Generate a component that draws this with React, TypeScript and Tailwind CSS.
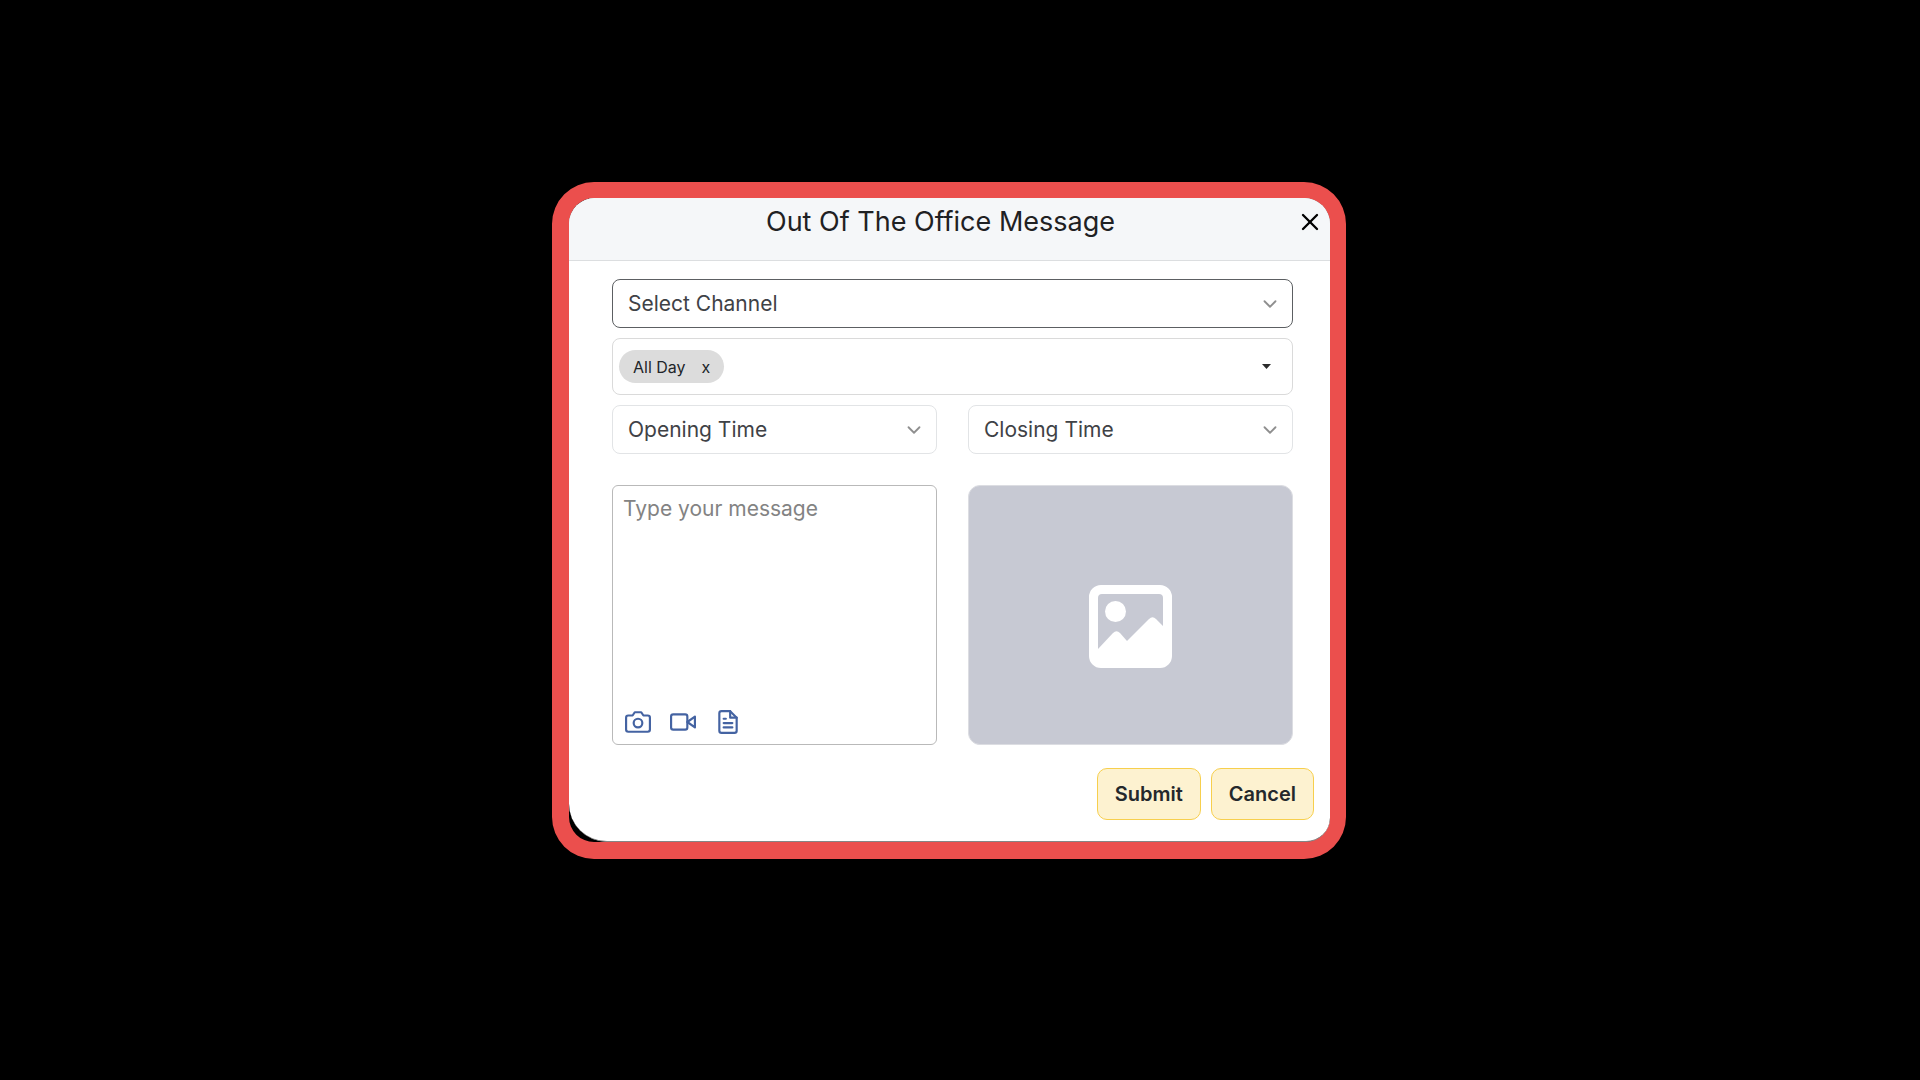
import React from "react";
import { ChevronDown, X } from "lucide-react";
import { FiCamera, FiFileText, FiVideo } from "react-icons/fi";

type SelectFieldProps = {
  id: string;
  label: string;
  borderClass: string;
};

function SelectField({ id, label, borderClass }: SelectFieldProps) {
  return (
    <div className="relative">
      <select
        id={id}
        className={`block h-[49px] w-full appearance-none rounded-lg border bg-white px-4 text-[21px] outline-none ${borderClass}`}
      >
        <option value="" />
      </select>
      <label
        htmlFor={id}
        className="pointer-events-none absolute inset-y-0 left-4 flex items-center text-[21px] text-[#3f4246]"
      >
        {label}
      </label>
      <ChevronDown
        className="pointer-events-none absolute top-[14px] right-3 text-[#8f8f8f]"
        size={22}
        strokeWidth={2}
        aria-hidden="true"
      />
    </div>
  );
}

function PictureIcon() {
  return (
    <svg viewBox="0 0 83 83" className="size-[83px]" aria-hidden="true">
      <path
        fill="#fff"
        fillRule="evenodd"
        d="M12 0H71A12 12 0 0 1 83 12V71A12 12 0 0 1 71 83H12A12 12 0 0 1 0 71V12A12 12 0 0 1 12 0ZM13 9Q9 9 9 13V64L24 48Q27.500 44.500 31 48L38 56L60 34Q63.500 30.500 67 34L74 41V13Q74 9 70 9Z"
      />
      <circle cx="26.500" cy="26.500" r="10.500" fill="#fff" />
    </svg>
  );
}

const actionClass =
  "h-[52px] rounded-[10px] border border-[#f7cf4d] bg-[#fdf2d0] px-[17px] text-[20px] font-semibold text-[#24282c]";

const attachments = [
  { name: "Attach photo", Icon: FiCamera },
  { name: "Attach video", Icon: FiVideo },
  { name: "Attach document", Icon: FiFileText },
];

export default function App() {
  return (
    <main className="flex min-h-screen items-center justify-center bg-black pr-[22px] pb-[39px] font-['Inter',sans-serif]">
      <div className="w-full max-w-[794px] rounded-[42px] border-16 border-b-[17px] border-l-[17px] border-[#eb4f4d] bg-black bg-clip-padding">
        <section
          role="dialog"
          aria-labelledby="dialog-title"
          className="overflow-hidden rounded-t-[26px] rounded-br-[24px] rounded-bl-[38px] border-b border-[#858585] bg-white"
        >
          <header className="flex h-[63px] items-start border-b border-[#dcdee0] bg-[#f5f7f9] pt-1 pr-[6px] pl-4">
            <h1
              id="dialog-title"
              className="flex-1 text-center text-[27px] leading-10 text-[#1f2123]"
            >
              Out Of The Office Message
            </h1>
            <button type="button" aria-label="Close" className="mt-[6px] text-black">
              <X size={28} strokeWidth={2} />
            </button>
          </header>

          <form onSubmit={(event) => event.preventDefault()}>
            <div className="pt-[18px] pr-[37px] pl-[43px]">
              <SelectField id="channel" label="Select Channel" borderClass="border-[#5c5f62]" />

              <div className="mt-[10px] flex h-[57px] items-center justify-between rounded-lg border border-[#dadada] pr-[17px] pl-[6px]">
                <span className="flex h-[33px] items-center gap-4 rounded-full bg-[#dcdcdc] px-[14px] text-[16px] text-[#212529]">
                  All Day
                  <button type="button" aria-label="Remove All Day">
                    x
                  </button>
                </span>
                <button type="button" aria-label="Show days" className="p-1">
                  <svg viewBox="0 0 9 5" className="h-[5px] w-[9px]" aria-hidden="true">
                    <path d="M0 0H9L4.500 5Z" fill="#2b2b2b" />
                  </svg>
                </button>
              </div>

              <div className="mt-[10px] grid grid-cols-2 gap-[31px]">
                <SelectField id="opening" label="Opening Time" borderClass="border-[#e2e4e6]" />
                <SelectField id="closing" label="Closing Time" borderClass="border-[#e2e4e6]" />

                <div className="flex h-[260px] flex-col rounded-md border border-[#b9b9b9]">
                  <textarea
                    aria-label="Message"
                    placeholder="Type your message"
                    className="flex-1 resize-none bg-transparent px-[10px] pt-[7px] text-[21px] leading-8 outline-none placeholder:text-[#838383]"
                  />
                  <div className="flex gap-[19px] pb-[9px] pl-3 text-[#4463a2]">
                    {attachments.map(({ name, Icon }) => (
                      <button key={name} type="button" aria-label={name}>
                        <Icon size={26} />
                      </button>
                    ))}
                  </div>
                </div>

                <div className="flex h-[260px] items-center justify-center rounded-xl border border-[#dcdde2] bg-[#c7c9d3] pt-[22px]">
                  <PictureIcon />
                </div>
              </div>
            </div>

            <footer className="flex justify-end gap-[10px] pt-[23px] pr-4 pb-[21px]">
              <button type="submit" className={actionClass}>
                Submit
              </button>
              <button type="button" className={actionClass}>
                Cancel
              </button>
            </footer>
          </form>
        </section>
      </div>
    </main>
  );
}
